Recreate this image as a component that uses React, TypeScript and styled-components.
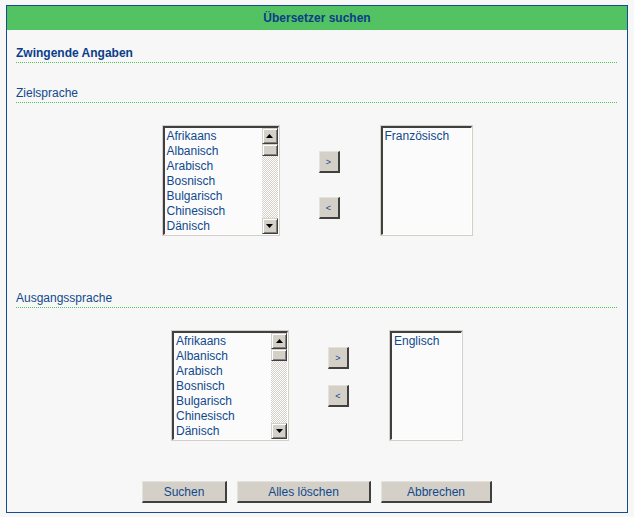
import * as React from "react"
import styled, {createGlobalStyle} from "styled-components"

const GlobalStyle = createGlobalStyle`
    body {
        margin: 0;
        background: #f7f7f7;
        font-family: "Liberation Sans", Arial, sans-serif;
        font-size: 12px;
        color: #11498c;
    }
`

// only the rows the box shows; the scroll bar stands for the rest
const languages = ["Afrikaans", "Albanisch", "Arabisch", "Bosnisch", "Bulgarisch", "Chinesisch", "Dänisch"]

type ListProps = {items: string[]; width: number; scroll?: boolean}

const ListBox = ({items, width, scroll}: ListProps) => (
    <ListFrame $width={width}>
        <ListInner>
            <ItemList>
                {items.map((item) => (
                    <Item key={item}>{item}</Item>
                ))}
            </ItemList>
            {scroll && (
                <ScrollBar>
                    <ScrollButton>
                        <svg width="7" height="4" viewBox="0 0 7 4">
                            <polygon points="3.5,0 7,4 0,4" fill="#000" />
                        </svg>
                    </ScrollButton>
                    <Thumb />
                    <Track />
                    <ScrollButton>
                        <svg width="7" height="4" viewBox="0 0 7 4">
                            <polygon points="0,0 7,0 3.5,4" fill="#000" />
                        </svg>
                    </ScrollButton>
                </ScrollBar>
            )}
        </ListInner>
    </ListFrame>
)

type PickerProps = {selected: string; rightWidth: number; offset: number; gap: number}

const Picker = ({selected, rightWidth, offset, gap}: PickerProps) => (
    <PickerRow>
        <ListBox items={languages} width={118} scroll />
        <Arrows $offset={offset} $gap={gap}>
            <ArrowButton>&gt;</ArrowButton>
            <ArrowButton>&lt;</ArrowButton>
        </Arrows>
        <ListBox items={[selected]} width={rightWidth} />
    </PickerRow>
)

export default function App() {
    return (
        <Page>
            <GlobalStyle />
            <Box>
                <Header>Übersetzer suchen</Header>
                <Content>
                    <Heading $bold $top={15}>Zwingende Angaben</Heading>
                    <Heading $top={22}>Zielsprache</Heading>
                    <Picker selected="Französisch" rightWidth={93} offset={26} gap={24} />
                    <Heading $top={54}>Ausgangssprache</Heading>
                    <Picker selected="Englisch" rightWidth={74} offset={17} gap={16} />
                    <Footer>
                        <FormButton $width={85}>Suchen</FormButton>
                        <FormButton $width={134}>Alles löschen</FormButton>
                        <FormButton $width={111}>Abbrechen</FormButton>
                    </Footer>
                </Content>
            </Box>
        </Page>
    )
}

const Page = styled("div")`
    padding: 5px 0 0 6px;
`
const Box = styled("div")`
    box-sizing: border-box;
    width: 622px;
    height: 508px;
    border: 1px solid #164b8f;
    background: #f7f7f7;
`
const Header = styled("div")`
    height: 24px;
    line-height: 25px;
    background: #52c263;
    color: #0c3d88;
    font-weight: bold;
    text-align: center;
`
const Content = styled("div")`
    padding: 0 9px;
`
const Heading = styled("div")<{$bold?: boolean; $top: number}>`
    margin-top: ${(p) => p.$top}px;
    line-height: 15px;
    padding: 1px 0 2px;
    background: linear-gradient(to right, #4fc35e 50%, transparent 50%) left bottom / 2px 1px repeat-x;
    font-weight: ${(p) => (p.$bold ? "bold" : "normal")};
    color: ${(p) => (p.$bold ? "#0c3d88" : "#11498c")};
`
const PickerRow = styled("div")`
    display: flex;
    justify-content: center;
    align-items: flex-start;
    gap: 39px;
    margin-top: 22px;
    height: 111px;
`
const ListFrame = styled("div")<{$width: number}>`
    box-sizing: border-box;
    width: ${(p) => p.$width}px;
    height: 111px;
    border: 1px solid #d4d0c8;
`
const ListInner = styled("div")`
    box-sizing: border-box;
    height: 100%;
    display: flex;
    background: #fbfbfb;
    border-top: 2px solid #404040;
    border-left: 2px solid #404040;
    border-right: 1px solid #ffffff;
    border-bottom: 1px solid #ffffff;
    overflow: hidden;
`
const ItemList = styled("ul")`
    flex: 1;
    margin: 0;
    padding: 1px 0 0 2px;
    list-style: none;
`
const Item = styled("li")`
    line-height: 15px;
    white-space: nowrap;
`
const ScrollBar = styled("div")`
    width: 16px;
    display: flex;
    flex-direction: column;
`
const ScrollButton = styled("div")`
    box-sizing: border-box;
    height: 16px;
    display: flex;
    align-items: center;
    justify-content: center;
    background: #d4d0c8;
    border-top: 1px solid #d4d0c8;
    border-left: 1px solid #d4d0c8;
    border-right: 1px solid #404040;
    border-bottom: 1px solid #404040;
    box-shadow: inset 1px 1px #ffffff, inset -1px -1px #808080;
`
const Thumb = styled(ScrollButton)`
    height: 12px;
`
const Track = styled("div")`
    flex: 1;
    background: repeating-conic-gradient(#d4d0c8 0 25%, #ffffff 0 50%) 0 0 / 2px 2px;
`
const Arrows = styled("div")<{$offset: number; $gap: number}>`
    display: flex;
    flex-direction: column;
    gap: ${(p) => p.$gap}px;
    padding-top: ${(p) => p.$offset}px;
    margin-right: 1px;
`
const ArrowButton = styled("button")`
    box-sizing: border-box;
    width: 21px;
    height: 22px;
    padding: 0;
    background: #d4d0c8;
    border-top: 1px solid #e4e2dc;
    border-left: 1px solid #e4e2dc;
    border-right: 2px solid #404040;
    border-bottom: 2px solid #404040;
    color: #11498c;
    font-family: "Liberation Sans", Arial, sans-serif;
    font-size: 9px;
`
const Footer = styled("div")`
    display: flex;
    justify-content: center;
    gap: 10px;
    margin-top: 40px;
`
const FormButton = styled("button")<{$width: number}>`
    box-sizing: border-box;
    width: ${(p) => p.$width}px;
    height: 22px;
    padding: 0;
    background: #d4d0c8;
    border-top: 1px solid #e4e2dc;
    border-left: 1px solid #e4e2dc;
    border-right: 2px solid #404040;
    border-bottom: 2px solid #404040;
    color: #11498c;
    font-family: "Liberation Sans", Arial, sans-serif;
    font-size: 12px;
`
